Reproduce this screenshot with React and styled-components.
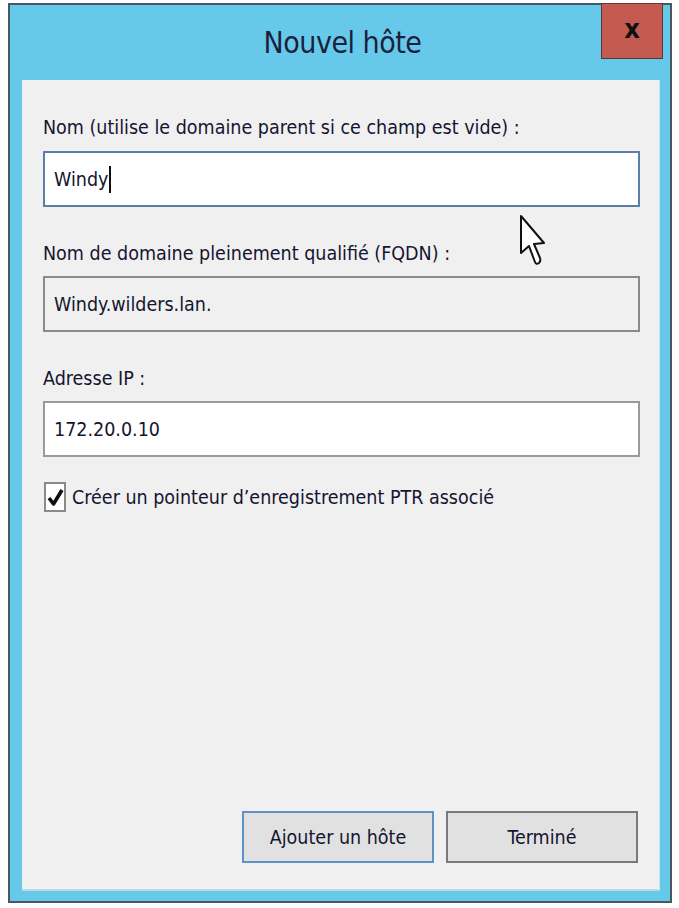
import React from "react";
import styled, { createGlobalStyle } from "styled-components";

const Global = createGlobalStyle`
  html, body {
    margin: 0;
    padding: 0;
    background: #ffffff;
  }
  body {
    font-family: "DejaVu Sans Condensed", "DejaVu Sans", sans-serif;
    font-stretch: condensed;
  }
`;

const Window = styled.div`
  position: relative;
  box-sizing: border-box;
  margin: 3px 0 0 8px;
  width: 664px;
  height: 900px;
  border: 2px solid #4b5760;
  background: #66c9ea;
  display: flex;
  flex-direction: column;
  padding: 0 10px 10px 12px;
`;

const TitleBar = styled.div`
  display: grid;
  grid-template-columns: 62px 1fr 62px;
  align-items: start;
  height: 75px;
  margin-right: -3px;
`;

const Title = styled.div`
  grid-column: 2;
  text-align: center;
  font-size: 30px;
  line-height: 30px;
  padding-top: 23px;
  color: #1c1f3c;
  letter-spacing: -0.5px;
`;

const CloseButton = styled.div`
  grid-column: 3;
  box-sizing: border-box;
  margin-top: -2px;
  height: 56px;
  background: #c55a50;
  border: 1px solid #5a3a36;
  display: flex;
  align-items: center;
  justify-content: center;
  font-family: "DejaVu Sans", sans-serif;
  font-weight: bold;
  font-size: 27px;
  color: #111;
  padding-bottom: 6px;
`;

const Panel = styled.div`
  flex: 1;
  background: #f0f0f0;
  border-right: 1px solid #bfe6f3;
  border-bottom: 2px solid #b9dbe6;
  display: flex;
  flex-direction: column;
  padding: 36px 19px 26px 21px;
`;

const Label = styled.div`
  font-size: 19.5px;
  line-height: 24px;
  color: #151530;
  margin-bottom: ${(p) => p.$gap || 11}px;
  margin-top: ${(p) => p.$top || 0}px;
`;

const Field = styled.div`
  box-sizing: border-box;
  height: ${(p) => p.$h || 56}px;
  border: 2px solid ${(p) => (p.$readonly ? "#8a8a8a" : p.$focus ? "#5b7fa8" : "#9a9a9a")};
  background: ${(p) => (p.$readonly ? "#f0f0f0" : "#ffffff")};
  display: flex;
  align-items: center;
  padding-left: 9px;
  font-size: 19.5px;
  color: #151530;
`;

const Caret = styled.span`
  display: inline-block;
  width: 2px;
  height: 27px;
  background: #111;
  margin-left: 1px;
`;

const CheckRow = styled.div`
  display: flex;
  align-items: center;
  gap: 6px;
  margin-top: 25px;
  font-size: 19.5px;
  color: #151530;
`;

const CheckBox = styled.div`
  box-sizing: border-box;
  width: 22px;
  height: 30px;
  margin-left: 1px;
  border: 2px solid #8a8a8a;
  background: #fff;
  display: flex;
  align-items: center;
  justify-content: center;
`;

const ButtonRow = styled.div`
  margin-top: auto;
  display: flex;
  justify-content: flex-end;
  gap: 12px;
  padding-right: 2px;
`;

const Button = styled.div`
  box-sizing: border-box;
  width: 192px;
  height: 52px;
  background: #e1e1e1;
  border: 2px solid ${(p) => (p.$default ? "#5f93c8" : "#7a7a7a")};
  display: flex;
  align-items: center;
  justify-content: center;
  font-size: 19.5px;
  color: #151530;
`;

const Cursor = styled.svg`
  position: absolute;
  left: 508px;
  top: 208px;
`;

export default function App() {
  return (
    <>
      <Global />
      <Window>
        <TitleBar>
          <Title>Nouvel hôte</Title>
          <CloseButton>x</CloseButton>
        </TitleBar>
        <Panel>
          <Label>Nom (utilise le domaine parent si ce champ est vide) :</Label>
          <Field $focus>
            Windy
            <Caret />
          </Field>
          <Label $top={35} $gap={10}>
            Nom de domaine pleinement qualifié (FQDN) :
          </Label>
          <Field $readonly>Windy.wilders.lan.</Field>
          <Label $top={35} $gap={10}>
            Adresse IP :
          </Label>
          <Field>172.20.0.10</Field>
          <CheckRow>
            <CheckBox>
              <svg width="17" height="20" viewBox="0 0 17 20">
                <path
                  d="M2 11 L6.5 17 L15 3"
                  fill="none"
                  stroke="#111"
                  strokeWidth="3.6"
                  strokeLinejoin="round"
                />
              </svg>
            </CheckBox>
            Créer un pointeur d’enregistrement PTR associé
          </CheckRow>
          <ButtonRow>
            <Button $default>Ajouter un hôte</Button>
            <Button>Terminé</Button>
          </ButtonRow>
        </Panel>
        <Cursor width="30" height="58" viewBox="0 0 30 58">
          <path
            d="M3 3 L3 40 L11 33 L17 49 Q18 52 21 50 Q23 48 22 45 L16 31 L26 30 Z"
            fill="#ffffff"
            stroke="#111"
            strokeWidth="2"
            strokeLinejoin="round"
          />
        </Cursor>
      </Window>
    </>
  );
}
